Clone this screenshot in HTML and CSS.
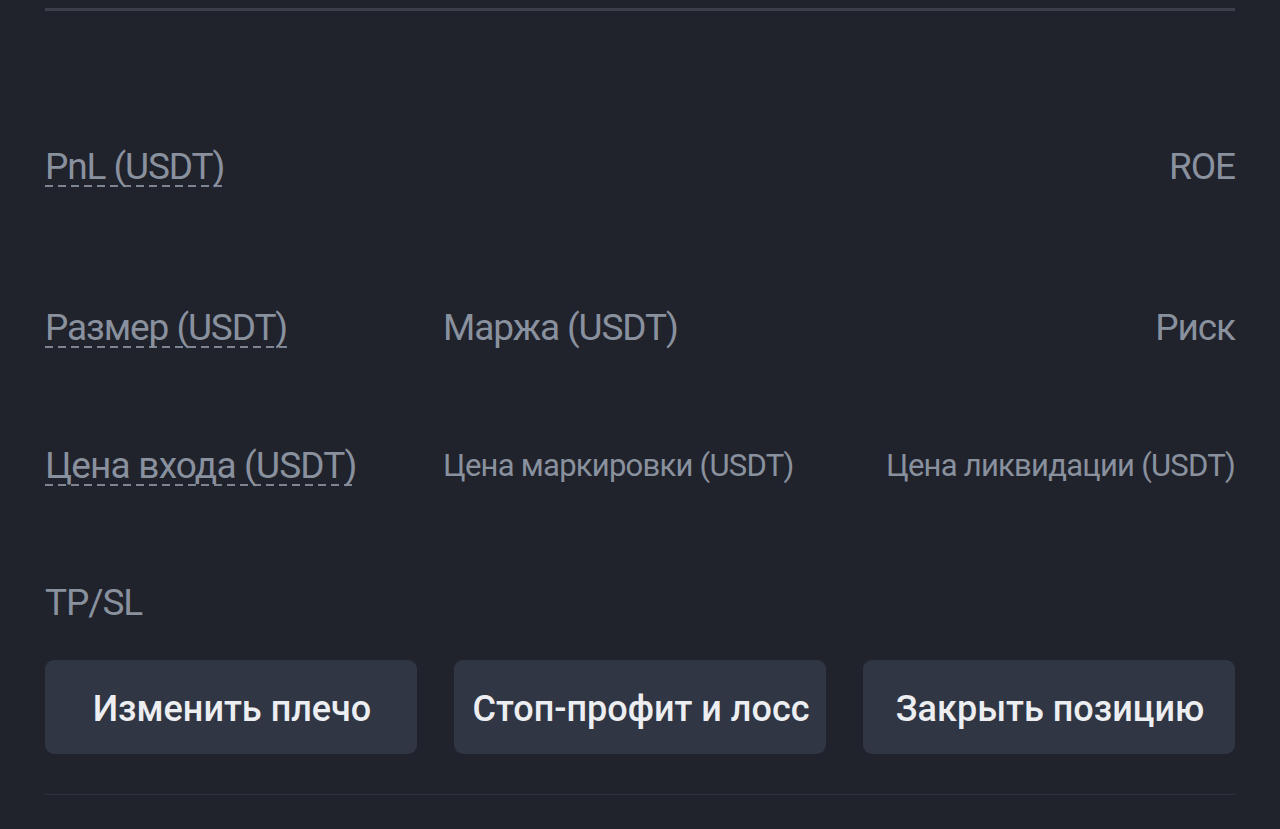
FILE: index.html
```html
<!DOCTYPE html>
<html lang="ru">
<head>
<meta charset="utf-8">
<title>Позиция</title>
<link rel="stylesheet" href="styles.css">
</head>
<body>
<div class="panel">
  <div class="rule-top"></div>

  <div class="row row-pnl">
    <span class="label big dashed">PnL (USDT)</span>
    <span class="label big">ROE</span>
  </div>

  <div class="grid row-size">
    <span class="label big dashed">Размер (USDT)</span>
    <span class="label big">Маржа (USDT)</span>
    <span class="label big right">Риск</span>
  </div>

  <div class="grid row-price">
    <span class="label big dashed">Цена входа (USDT)</span>
    <span class="label small">Цена маркировки (USDT)</span>
    <span class="label small right">Цена ликвидации (USDT)</span>
  </div>

  <div class="row row-tpsl">
    <span class="label big">TP/SL</span>
  </div>

  <div class="actions">
    <button class="btn">Изменить плечо</button>
    <button class="btn">Стоп-профит и лосс</button>
    <button class="btn">Закрыть позицию</button>
  </div>

  <div class="rule-bottom"></div>
</div>
</body>
</html>
```

FILE: styles.css
```css
* { box-sizing: border-box; }
html, body {
  margin: 0;
  padding: 0;
  background: #20232c;
  height: 100%;
}
body {
  font-family: Roboto, "Noto Sans", sans-serif;
  overflow: hidden;
}
.panel {
  padding: 8px 45px 0;
}
.rule-top {
  height: 3px;
  background: #3a3f49;
}
.row {
  display: flex;
  justify-content: space-between;
  align-items: center;
  height: 50px;
}
.grid {
  display: grid;
  grid-template-columns: 398px 1fr auto;
  align-items: center;
  height: 50px;
}
.row-pnl { margin-top: 131px; }
.row-size { margin-top: 111px; }
.row-price { margin-top: 88px; }
.row-tpsl { margin-top: 87px; }

.label {
  color: #8a919e;
  white-space: nowrap;
  line-height: 50px;
}
.big {
  font-size: 37px;
  letter-spacing: -1.1px;
}
.small {
  font-size: 31px;
  letter-spacing: -0.75px;
}
.right { text-align: right; }
.dashed {
  justify-self: start;
  background-image: repeating-linear-gradient(to right, #7d8593 0 8px, transparent 8px 13px);
  background-size: 100% 2px;
  background-repeat: no-repeat;
  background-position: 0 43px;
}
.row-price .dashed { letter-spacing: -0.8px; }

.actions {
  display: grid;
  grid-template-columns: repeat(3, 1fr);
  gap: 37px;
  margin-top: 32px;
}
.btn {
  height: 94px;
  border: 0;
  border-radius: 9px;
  background: #303643;
  color: #eceef1;
  font-family: Roboto, "Noto Sans", sans-serif;
  font-size: 36px;
  font-weight: 500;
  letter-spacing: 0;
  padding: 4px 0 0 2px;
}
.rule-bottom {
  margin-top: 40px;
  height: 1px;
  background: #2d313b;
}
```
